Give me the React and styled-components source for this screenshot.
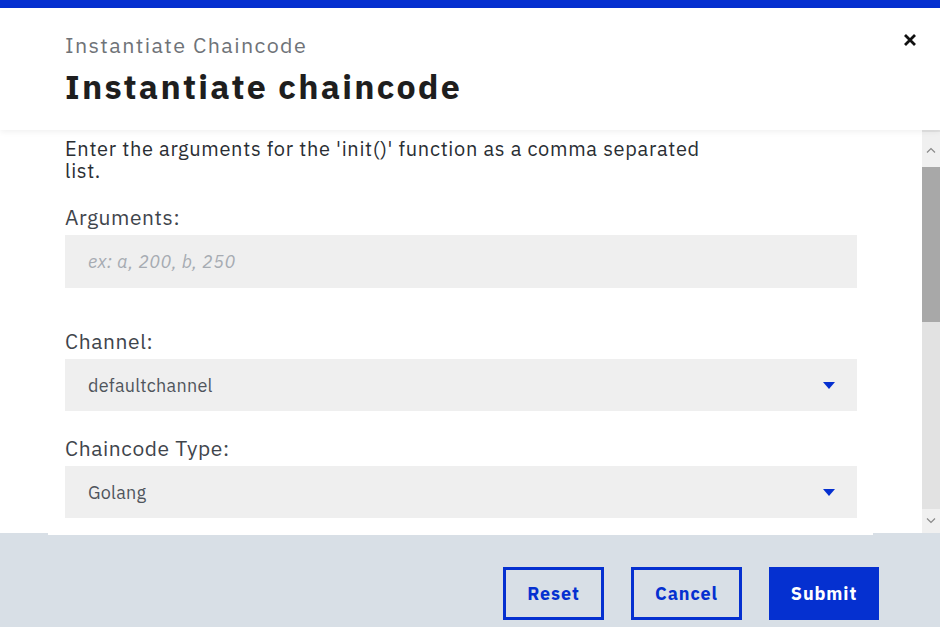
import React from "react";
import styled, { createGlobalStyle } from "styled-components";

const blue = "#0530d0";

const GlobalStyle = createGlobalStyle`
  html, body {
    margin: 0;
    padding: 0;
    background: #ffffff;
  }
  body {
    font-family: "IBM Plex Sans", "Open Sans", "Liberation Sans", sans-serif;
  }
`;

const Modal = styled.div`
  width: 940px;
  height: 627px;
  display: flex;
  flex-direction: column;
  overflow: hidden;
  background: #ffffff;
`;

const TopBar = styled.div`
  height: 8px;
  background: ${blue};
  flex-shrink: 0;
`;

const Header = styled.div`
  height: 122px;
  padding: 24px 0 0 65px;
  box-sizing: border-box;
  display: flex;
  justify-content: space-between;
  box-shadow: 0 2px 6px rgba(0, 0, 0, 0.06);
  position: relative;
  z-index: 1;
  flex-shrink: 0;
`;

const Titles = styled.div`
  display: flex;
  flex-direction: column;
`;

const Label = styled.div`
  font-size: 21.5px;
  color: #6f7378;
  letter-spacing: 1.4px;
  line-height: 26px;
`;

const Title = styled.h1`
  margin: 7px 0 0;
  font-size: 34px;
  font-weight: 700;
  color: #1e1e1e;
  line-height: 42px;
  letter-spacing: 2.25px;
`;

const Close = styled.button`
  border: none;
  background: none;
  padding: 0;
  width: 20px;
  height: 20px;
  margin: -2px 20px 0 0;
  display: flex;
  align-items: center;
  justify-content: center;
  cursor: pointer;
`;

const Body = styled.div`
  height: 403px;
  display: flex;
  flex-shrink: 0;
`;

const Content = styled.div`
  flex: 1;
  overflow: hidden;
  padding: 8px 0 0 65px;
  box-sizing: border-box;
`;

const Form = styled.div`
  width: 792px;
  display: flex;
  flex-direction: column;
`;

const Intro = styled.p`
  margin: 0;
  max-width: 670px;
  font-size: 20px;
  line-height: 22px;
  letter-spacing: 0.7px;
  color: #2a2e33;
`;

const Field = styled.div`
  display: flex;
  flex-direction: column;
  margin-top: ${(p) => p.$gap}px;
`;

const FieldLabel = styled.label`
  font-size: 21px;
  line-height: 26px;
  letter-spacing: 0.6px;
  color: #3f454c;
  margin-bottom: 5px;
`;

const Input = styled.input`
  height: 53px;
  border: none;
  background: #efefef;
  padding: 0 23px;
  font-family: inherit;
  font-size: 18px;
  letter-spacing: 0.4px;
  outline: none;
  &::placeholder {
    color: #a6abb2;
    font-style: italic;
  }
`;

const Select = styled.div`
  height: 52px;
  background: #efefef;
  display: flex;
  align-items: center;
  justify-content: space-between;
  padding: 0 22px 0 23px;
  font-size: 18px;
  letter-spacing: 0.25px;
  color: #4f555c;
`;

const Caret = styled.span`
  width: 0;
  height: 0;
  border-left: 6px solid transparent;
  border-right: 6px solid transparent;
  border-top: 7px solid ${blue};
`;

const Scrollbar = styled.div`
  width: 18px;
  background: #e2e2e2;
  display: flex;
  flex-direction: column;
  align-items: stretch;
  padding-top: 2px;
  box-sizing: border-box;
`;

const ScrollArrow = styled.div`
  height: ${(p) => p.$h}px;
  display: flex;
  align-items: center;
  justify-content: center;
  background: #f0f0f0;
  margin-top: ${(p) => (p.$bottom ? "auto" : 0)};
`;

const Thumb = styled.div`
  height: 155px;
  background: #a8a8a8;
`;

const Footer = styled.div`
  flex: 1;
  background: #d8dfe6;
  display: flex;
  flex-direction: column;
`;

const FooterEdge = styled.div`
  height: 2px;
  margin: 0 67px 0 48px;
  background: #ffffff;
`;

const Actions = styled.div`
  display: flex;
  justify-content: flex-end;
  gap: 27px;
  padding: 32px 61px 0 0;
`;

const Button = styled.button`
  width: ${(p) => p.$w}px;
  height: 53px;
  box-sizing: border-box;
  border: 3px solid ${blue};
  background: ${(p) => (p.$primary ? blue : "transparent")};
  color: ${(p) => (p.$primary ? "#ffffff" : blue)};
  font-family: inherit;
  font-size: 18px;
  font-weight: 700;
  letter-spacing: 0.9px;
  cursor: pointer;
`;

const Chevron = ({ up }) => (
  <svg width="10" height="6" viewBox="0 0 10 6">
    <path
      d={up ? "M1 5.5 L5 1.5 L9 5.5" : "M1 0.5 L5 4.5 L9 0.5"}
      fill="none"
      stroke="#8a8a8a"
      strokeWidth="1.2"
    />
  </svg>
);

export default function App() {
  return (
    <>
      <GlobalStyle />
      <Modal>
        <TopBar />
        <Header>
          <Titles>
            <Label>Instantiate Chaincode</Label>
            <Title>Instantiate chaincode</Title>
          </Titles>
          <Close aria-label="close">
            <svg width="14" height="14" viewBox="0 0 14 14">
              <path d="M2 2 L12 12 M12 2 L2 12" stroke="#111" strokeWidth="2.8" />
            </svg>
          </Close>
        </Header>
        <Body>
          <Content>
            <Form>
              <Intro>
                Enter the arguments for the 'init()' function as a comma separated list.
              </Intro>
              <Field $gap={22}>
                <FieldLabel>Arguments:</FieldLabel>
                <Input placeholder="ex: a, 200, b, 250" />
              </Field>
              <Field $gap={40}>
                <FieldLabel>Channel:</FieldLabel>
                <Select>
                  defaultchannel
                  <Caret />
                </Select>
              </Field>
              <Field $gap={24}>
                <FieldLabel>Chaincode Type:</FieldLabel>
                <Select>
                  Golang
                  <Caret />
                </Select>
              </Field>
            </Form>
          </Content>
          <Scrollbar>
            <ScrollArrow $h={35}>
              <Chevron up />
            </ScrollArrow>
            <Thumb />
            <ScrollArrow $h={24} $bottom>
              <Chevron />
            </ScrollArrow>
          </Scrollbar>
        </Body>
        <Footer>
          <FooterEdge />
          <Actions>
            <Button $w={101}>Reset</Button>
            <Button $w={111}>Cancel</Button>
            <Button $w={110} $primary>Submit</Button>
          </Actions>
        </Footer>
      </Modal>
    </>
  );
}
